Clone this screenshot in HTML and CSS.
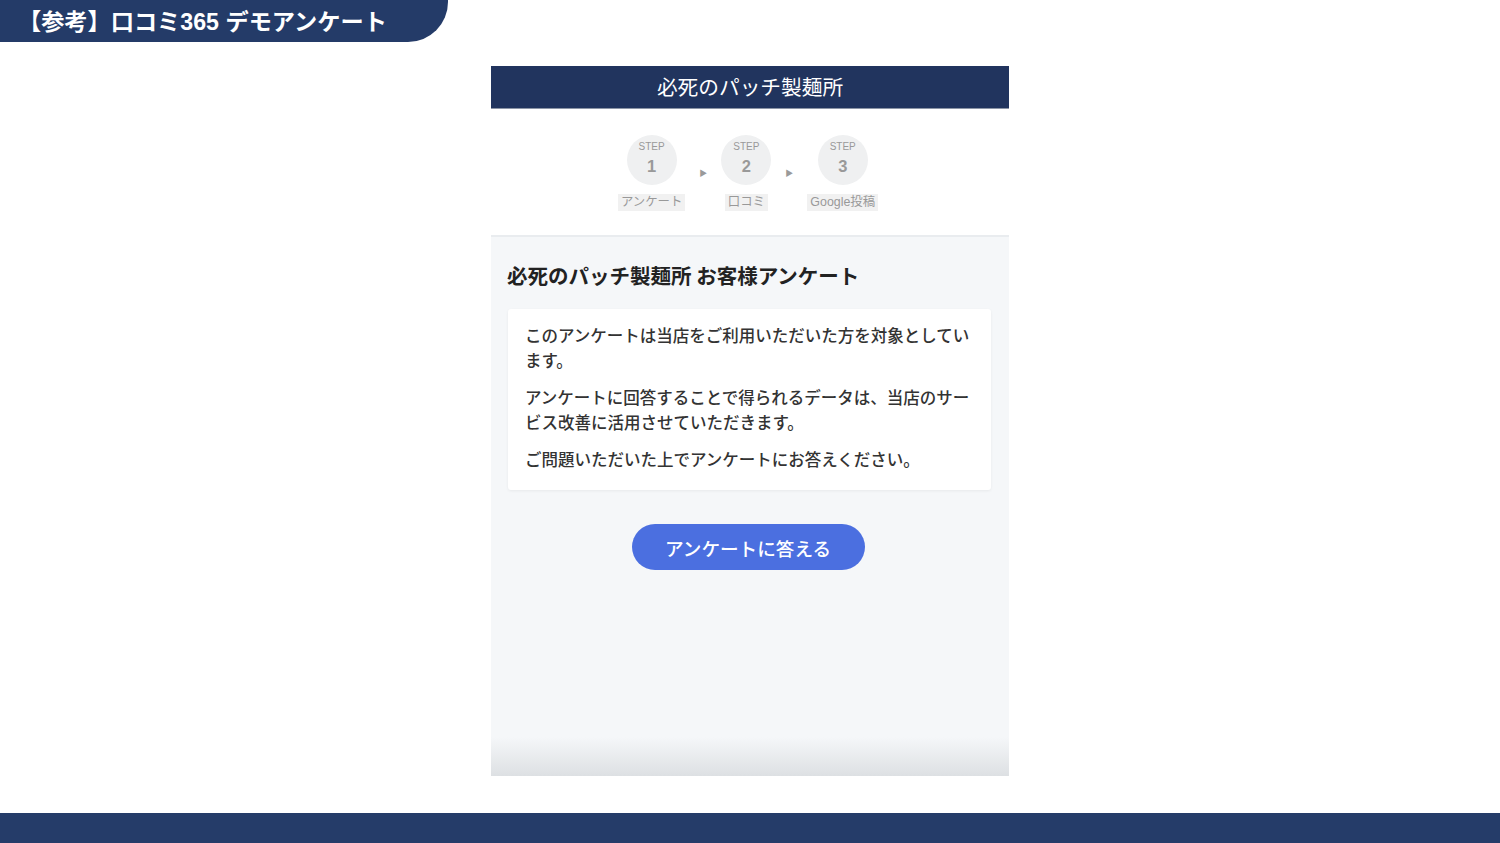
FILE: index.html
```html
<!DOCTYPE html>
<html lang="ja">
<head>
    <meta charset="UTF-8">
    <title>【参考】口コミ365 デモアンケート</title>
    <link rel="stylesheet" href="styles.css">
</head>
<body>
    <div class="page">
        <div class="tab">【参考】口コミ365 デモアンケート</div>

        <div class="phone">
            <div class="shop-header">必死のパッチ製麺所</div>

            <div class="steps">
                <div class="step">
                    <div class="circle">
                        <span class="step-word">STEP</span>
                        <span class="step-num">1</span>
                    </div>
                    <span class="step-label">アンケート</span>
                </div>
                <span class="arrow">&#9654;</span>
                <div class="step">
                    <div class="circle">
                        <span class="step-word">STEP</span>
                        <span class="step-num">2</span>
                    </div>
                    <span class="step-label">口コミ</span>
                </div>
                <span class="arrow">&#9654;</span>
                <div class="step">
                    <div class="circle">
                        <span class="step-word">STEP</span>
                        <span class="step-num">3</span>
                    </div>
                    <span class="step-label">Google投稿</span>
                </div>
            </div>

            <div class="content">
                <h2 class="survey-title">必死のパッチ製麺所 お客様アンケート</h2>
                <div class="card">
                    <p>このアンケートは当店をご利用いただいた方を対象としています。</p>
                    <p>アンケートに回答することで得られるデータは、当店のサービス改善に活用させていただきます。</p>
                    <p>ご問題いただいた上でアンケートにお答えください。</p>
                </div>
                <div class="action">
                    <button class="start-btn">アンケートに答える</button>
                </div>
            </div>
        </div>

        <div class="footer"></div>
    </div>
</body>
</html>
```

FILE: styles.css
```css
body {
    margin: 0;
    background-color: #fff;
    font-family: "Noto Sans CJK JP", "Noto Sans", sans-serif;
}
.page {
    height: 843px;
    display: flex;
    flex-direction: column;
    overflow: hidden;
}
.tab {
    width: 430px;
    height: 42px;
    padding-left: 18px;
    background-color: #243b68;
    color: #fff;
    font-family: "Liberation Sans", "Noto Sans CJK JP", sans-serif;
    font-weight: bold;
    font-size: 23.2px;
    line-height: 44px;
    border-bottom-right-radius: 40px;
    white-space: nowrap;
}
.phone {
    width: 518px;
    height: 710px;
    margin: 24px auto 0;
    display: flex;
    flex-direction: column;
    background-color: #f5f7f9;
}
.shop-header {
    height: 43px;
    background-color: #21345e;
    color: #fff;
    text-align: center;
    font-size: 20.7px;
    line-height: 41px;
    border-bottom: 1px solid #8c95a6;
    box-sizing: border-box;
}
.steps {
    display: flex;
    justify-content: center;
    align-items: flex-start;
    gap: 14px;
    padding: 26px 4px 0 0;
    height: 100px;
    background-color: #fff;
    border-bottom: 2px solid #e9ecef;
}
.step {
    display: flex;
    flex-direction: column;
    align-items: center;
    gap: 9px;
}
.circle {
    width: 50px;
    height: 50px;
    border-radius: 50%;
    background-color: #eff0f1;
    display: flex;
    flex-direction: column;
    align-items: center;
    justify-content: center;
    color: #999;
    font-family: "Liberation Sans", sans-serif;
}
.step-word {
    font-size: 10px;
    line-height: 12px;
    margin-top: -3px;
}
.step-num {
    font-size: 16.5px;
    font-weight: bold;
    line-height: 20px;
    margin-top: 3px;
}
.step-label {
    font-size: 12.4px;
    line-height: 17px;
    color: #999;
    background-color: #f1f1f1;
    padding: 0 3px;
    font-family: "Liberation Sans", "Noto Sans CJK JP", sans-serif;
}
.arrow {
    font-size: 8px;
    color: #9a9a9a;
    margin-top: 32px;
}
.content {
    flex: 1;
    padding: 24px 18px 0 16px;
    background: linear-gradient(to bottom, #f5f7f9 0, #f5f7f9 500px, #dde0e3 100%);
}
.survey-title {
    margin: 0 0 20px;
    font-size: 20.5px;
    font-weight: bold;
    line-height: 28px;
    color: #222;
}
.card {
    margin-left: 1px;
    background-color: #fff;
    padding: 14px 17px 18px;
    border-radius: 3px;
    box-shadow: 0 1px 3px rgba(0,0,0,0.06);
    color: #333;
    font-size: 16.5px;
    font-weight: 500;
    line-height: 25px;
}
.card p {
    margin: 0 0 12px;
}
.card p:last-child {
    margin-bottom: 0;
}
.action {
    display: flex;
    justify-content: center;
    margin-top: 34px;
}
.start-btn {
    width: 233px;
    height: 46px;
    border: none;
    border-radius: 23px;
    background-color: #4b6fe0;
    color: #fff;
    font-family: "Noto Sans CJK JP", sans-serif;
    font-size: 18.6px;
    font-weight: 500;
    cursor: pointer;
    margin-right: 2px;
}
.footer {
    margin-top: auto;
    height: 30px;
    background-color: #253c69;
}
```
